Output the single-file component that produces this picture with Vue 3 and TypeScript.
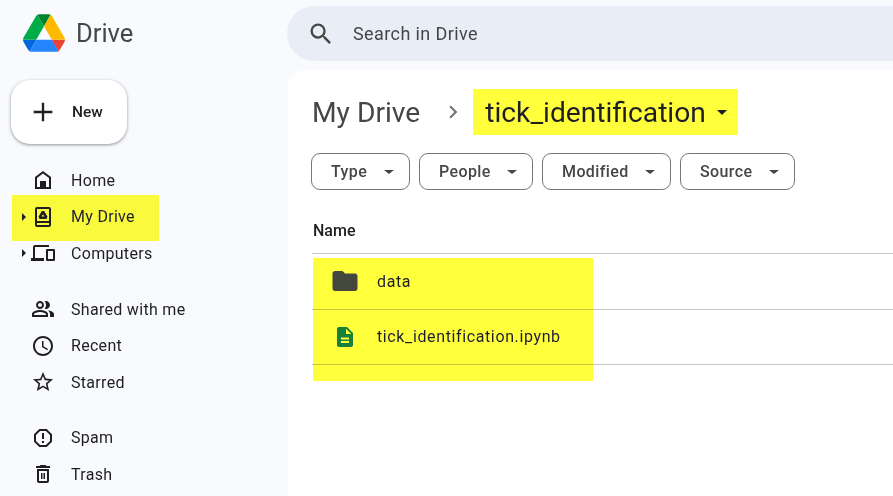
<script setup lang="ts">
interface NavItem {
  label: string
  icon: string
  caret?: boolean
}

const navGroups: NavItem[][] = [
  [
    { label: 'Home', icon: 'M12 3L4 9v12h16V9l-8-6zm6 16h-3v-6H9v6H6v-9l6-4.5 6 4.5v9z' },
    {
      label: 'My Drive',
      caret: true,
      icon: 'M6 2h12a2 2 0 0 1 2 2v16a2 2 0 0 1-2 2H6a2 2 0 0 1-2-2V4a2 2 0 0 1 2-2zm0 2v12h12V4H6zm0 14v2h12v-2H6zM10.800 6h2.400l3.300 5.700-1.100 2.300H8.600l-1.100-2.300L10.800 6zM12 9.300l-1.300 2.300h2.600L12 9.300z',
    },
    {
      label: 'Computers',
      caret: true,
      icon: 'M4 6h14V4H4a2 2 0 0 0-2 2v11H0v3h13v-3H4V6zm19 2h-7a1 1 0 0 0-1 1v10a1 1 0 0 0 1 1h7a1 1 0 0 0 1-1V9a1 1 0 0 0-1-1zm-1 10h-5v-8h5v8z',
    },
  ],
  [
    {
      label: 'Shared with me',
      icon: 'M16.67 13.13C18.04 14.06 19 15.32 19 17v3h4v-3c0-2.18-3.57-3.47-6.33-3.87zM15 12c2.21 0 4-1.79 4-4s-1.79-4-4-4c-.47 0-.91.1-1.33.24C14.5 5.27 15 6.58 15 8s-.5 2.73-1.33 3.76c.42.14.86.24 1.33.24zM9 12c2.21 0 4-1.79 4-4s-1.79-4-4-4-4 1.79-4 4 1.79 4 4 4zm0-6c1.1 0 2 .9 2 2s-.9 2-2 2-2-.9-2-2 .9-2 2-2zM9 13c-2.67 0-8 1.34-8 4v3h16v-3c0-2.66-5.33-4-8-4zm6 5H3v-.99C3.2 16.29 6.3 15 9 15s5.8 1.29 6 2v1z',
    },
    {
      label: 'Recent',
      icon: 'M11.99 2C6.47 2 2 6.48 2 12s4.47 10 9.99 10C17.52 22 22 17.520 22 12S17.520 2 11.990 2zM12 20c-4.420 0-8-3.580-8-8s3.580-8 8-8 8 3.580 8 8-3.580 8-8 8zm.5-13H11v6l5.250 3.150.75-1.230-4.500-2.670V7z',
    },
    {
      label: 'Starred',
      icon: 'M22 9.24l-7.19-.62L12 2 9.190 8.630 2 9.240l5.460 4.730L5.820 21 12 17.270 18.180 21l-1.630-7.030L22 9.240zM12 15.400l-3.760 2.270 1-4.280-3.320-2.880 4.380-.380L12 6.100l1.710 4.040 4.380.380-3.320 2.880 1 4.280L12 15.400z',
    },
  ],
  [
    {
      label: 'Spam',
      icon: 'M15.730 3H8.270L3 8.270v7.460L8.270 21h7.460L21 15.730V8.270L15.730 3zM19 14.900L14.900 19H9.100L5 14.900V9.100L9.100 5h5.800L19 9.100v5.800zM11 7h2v6h-2zM11 15h2v2h-2z',
    },
    {
      label: 'Trash',
      icon: 'M6 19c0 1.100.9 2 2 2h8c1.100 0 2-.9 2-2V7H6v12zM8 9h8v10H8V9zm7.500-5l-1-1h-5l-1 1H5v2h14V4zM10 11h1.500v6H10zM12.500 11H14v6h-1.500z',
    },
  ],
]

const filters = ['Type', 'People', 'Modified', 'Source']
</script>

<template>
  <div class="page">
    <aside class="sidebar">
      <div class="brand">
        <svg class="logo" viewBox="0 0 87.3 78">
          <path d="m6.6 66.85 3.85 6.65c.8 1.4 1.95 2.5 3.3 3.3l13.75-23.8h-27.5c0 1.55.4 3.1 1.2 4.5z" fill="#0066da" />
          <path d="m43.65 25-13.75-23.8c-1.35.8-2.5 1.9-3.3 3.3l-25.4 44a9.06 9.06 0 0 0 -1.2 4.5h27.5z" fill="#00ac47" />
          <path d="m73.55 76.8c1.35-.8 2.5-1.9 3.3-3.3l1.6-2.75 7.65-13.25c.8-1.4 1.2-2.95 1.2-4.5h-27.502l5.852 11.5z" fill="#ea4335" />
          <path d="m43.65 25 13.75-23.8c-1.35-.8-2.9-1.2-4.5-1.2h-18.5c-1.6 0-3.15.45-4.5 1.2z" fill="#00832d" />
          <path d="m59.8 53h-32.3l-13.75 23.8c1.35.8 2.9 1.2 4.5 1.2h50.8c1.6 0 3.15-.45 4.5-1.2z" fill="#2684fc" />
          <path d="m73.4 26.5-12.7-22c-.8-1.4-1.95-2.5-3.3-3.3l-13.75 23.8 16.15 28h27.45c0-1.55-.4-3.1-1.2-4.5z" fill="#ffba00" />
        </svg>
        <span class="brand-name">Drive</span>
      </div>

      <button class="new-btn">
        <svg viewBox="0 0 24 24" class="plus"><path d="M20 13h-7v7h-2v-7H4v-2h7V4h2v7h7v2z" /></svg>
        <span>New</span>
      </button>

      <nav class="nav">
        <ul v-for="(group, g) in navGroups" :key="g" class="nav-group">
          <li v-for="item in group" :key="item.label" class="nav-item">
            <span v-if="item.caret" class="nav-caret" />
            <svg class="nav-icon" viewBox="0 0 24 24"><path :d="item.icon" fill-rule="evenodd" /></svg>
            <span>{{ item.label }}</span>
          </li>
        </ul>
      </nav>
    </aside>

    <div class="content">
      <div class="search">
        <svg viewBox="0 0 24 24" class="search-icon">
          <path d="M15.500 14h-.79l-.28-.27A6.470 6.470 0 0 0 16 9.500 6.500 6.500 0 1 0 9.500 16c1.610 0 3.090-.59 4.230-1.570l.27.28v.79l5 4.990L20.490 19l-4.990-5zm-6 0C7.010 14 5 11.990 5 9.500S7.010 5 9.500 5 14 7.010 14 9.500 11.990 14 9.500 14z" />
        </svg>
        <span>Search in Drive</span>
      </div>

      <main class="panel">
        <div class="crumbs">
          <span>My Drive</span>
          <svg viewBox="0 0 24 24" class="chevron"><path d="M8.590 16.590 13.170 12 8.590 7.410 10 6l6 6-6 6z" /></svg>
          <span class="crumb-current">tick_identification</span>
          <span class="crumb-caret" />
        </div>

        <div class="filters">
          <button v-for="f in filters" :key="f" class="filter">
            <span>{{ f }}</span>
            <span class="filter-caret" />
          </button>
        </div>

        <div class="head-row">Name</div>
        <div class="file-row">
          <span class="file-icon">
            <svg viewBox="0 0 24 24" class="folder-svg">
              <path fill="#444746" d="M10 4H4c-1.100 0-2 .9-2 2v12c0 1.100.9 2 2 2h16c1.100 0 2-.9 2-2V8c0-1.100-.9-2-2-2h-8l-2-2z" />
            </svg>
          </span>
          <span>data</span>
        </div>
        <div class="file-row">
          <span class="file-icon">
            <svg viewBox="0 0 24 24" class="doc-svg">
              <path fill="#188038" fill-rule="evenodd" d="M14 2H6c-1.100 0-2 .9-2 2v16c0 1.100.9 2 2 2h12c1.100 0 2-.9 2-2V8l-6-6zM13 9V3.800L18.200 9H13zM8 12.500h8v2H8v-2zm0 3.500h8v2H8v-2z" />
            </svg>
          </span>
          <span>tick_identification.ipynb</span>
        </div>
      </main>
    </div>

    <!-- marker annotations painted over the screenshot -->
    <div class="marker marker-nav" />
    <div class="marker marker-title" />
    <div class="marker marker-rows" />
  </div>
</template>

<style scoped>
.page {
  position: relative;
  display: flex;
  width: 893px;
  height: 496px;
  overflow: hidden;
  background: #f8fafd;
  color: #1f1f1f;
  font-family: Roboto, "Liberation Sans", sans-serif;
}

.sidebar {
  flex: 0 0 287px;
  display: flex;
  flex-direction: column;
}

.brand {
  flex: none;
  display: flex;
  align-items: center;
  gap: 11px;
  height: 66px;
  padding-left: 23px;
}

.logo {
  width: 42px;
  height: 38px;
}

.brand-name {
  font-size: 25.500px;
  color: #444746;
}

.new-btn {
  flex: none;
  display: flex;
  align-items: center;
  gap: 15px;
  width: 116px;
  height: 64px;
  margin: 14px 0 0 11px;
  padding: 0 0 0 18px;
  border: 0;
  border-radius: 19px;
  background: #fff;
  box-shadow: 0 1px 3px 1px rgba(60, 64, 67, 0.2), 0 1px 2px rgba(60, 64, 67, 0.3);
  font: 500 15.500px Roboto, "Liberation Sans", sans-serif;
  color: #1f1f1f;
}

.plus {
  width: 28px;
  height: 28px;
  fill: #1f1f1f;
}

.nav {
  flex: none;
  margin-top: 18px;
}

.nav-group {
  list-style: none;
  margin: 0 0 19px;
  padding: 0;
}

.nav-item {
  position: relative;
  display: flex;
  align-items: center;
  gap: 16px;
  height: 36.600px;
  padding-left: 31px;
  font-size: 16px;
  letter-spacing: 0.3px;
  color: #1f1f1f;
}

.nav-icon {
  flex: none;
  width: 24px;
  height: 24px;
  fill: #1f1f1f;
}

.nav-caret {
  position: absolute;
  left: 22px;
  top: 50%;
  margin-top: -4px;
  border-left: 4.500px solid #1f1f1f;
  border-top: 4px solid transparent;
  border-bottom: 4px solid transparent;
}

.content {
  flex: 1;
  display: flex;
  flex-direction: column;
  min-width: 0;
}

.search {
  flex: none;
  display: flex;
  align-items: center;
  gap: 18px;
  height: 55px;
  margin-top: 6px;
  padding-left: 20px;
  border-radius: 28px 0 0 28px;
  background: #e9eef6;
  font-size: 18px;
  letter-spacing: 0.4px;
  color: #444746;
}

.search-icon {
  width: 28px;
  height: 28px;
  fill: #444746;
}

.panel {
  flex: 1;
  margin: 9px 0 0 1px;
  padding-left: 24px;
  border-radius: 18px 0 0 0;
  background: #fff;
}

.crumbs {
  display: flex;
  align-items: center;
  height: 46px;
  margin-top: 19px;
  font-size: 28.200px;
  color: #444746;
}

.chevron {
  width: 26px;
  height: 26px;
  margin: 0 19px 0 20px;
  fill: #747775;
}

.crumb-current {
  color: #1f1f1f;
}

.crumb-caret {
  margin-left: 11px;
  border-top: 5px solid #1f1f1f;
  border-left: 5.500px solid transparent;
  border-right: 5.500px solid transparent;
}

.filters {
  display: grid;
  grid-template-columns: 99px 114px 129px 115px;
  column-gap: 9px;
  margin: 18px 0 0 -1px;
}

.filter {
  display: flex;
  align-items: center;
  justify-content: space-between;
  height: 37px;
  padding: 0 15px 0 19px;
  border: 1px solid #747775;
  border-radius: 9px;
  background: #fff;
  font: 500 16px Roboto, "Liberation Sans", sans-serif;
  letter-spacing: 0.4px;
  color: #444746;
}

.filter-caret {
  border-top: 4.500px solid #444746;
  border-left: 5px solid transparent;
  border-right: 5px solid transparent;
}

.head-row {
  display: flex;
  align-items: flex-end;
  height: 64px;
  padding: 0 0 13px 1px;
  box-sizing: border-box;
  border-bottom: 1px solid #c7c7c7;
  font-size: 16px;
  font-weight: 500;
  color: #1f1f1f;
}

.file-row {
  display: flex;
  align-items: center;
  gap: 17px;
  height: 55.500px;
  box-sizing: border-box;
  padding-left: 18px;
  border-bottom: 1px solid #c7c7c7;
  font-size: 16px;
  letter-spacing: 0.62px;
  color: #1f1f1f;
}

.file-icon {
  flex: none;
  display: flex;
  align-items: center;
  justify-content: center;
  width: 30px;
  height: 30px;
}

.folder-svg {
  width: 30px;
  height: 30px;
}

.doc-svg {
  width: 24px;
  height: 24px;
}

/* darken keeps text and icons at their own colour under the marker */
.marker {
  position: absolute;
  background: #ffff3b;
  mix-blend-mode: darken;
}

.marker-nav {
  left: 12px;
  top: 195px;
  width: 147px;
  height: 46px;
}

.marker-title {
  left: 473px;
  top: 89px;
  width: 265px;
  height: 46px;
}

.marker-rows {
  left: 313px;
  top: 258px;
  width: 280px;
  height: 123px;
}
</style>
